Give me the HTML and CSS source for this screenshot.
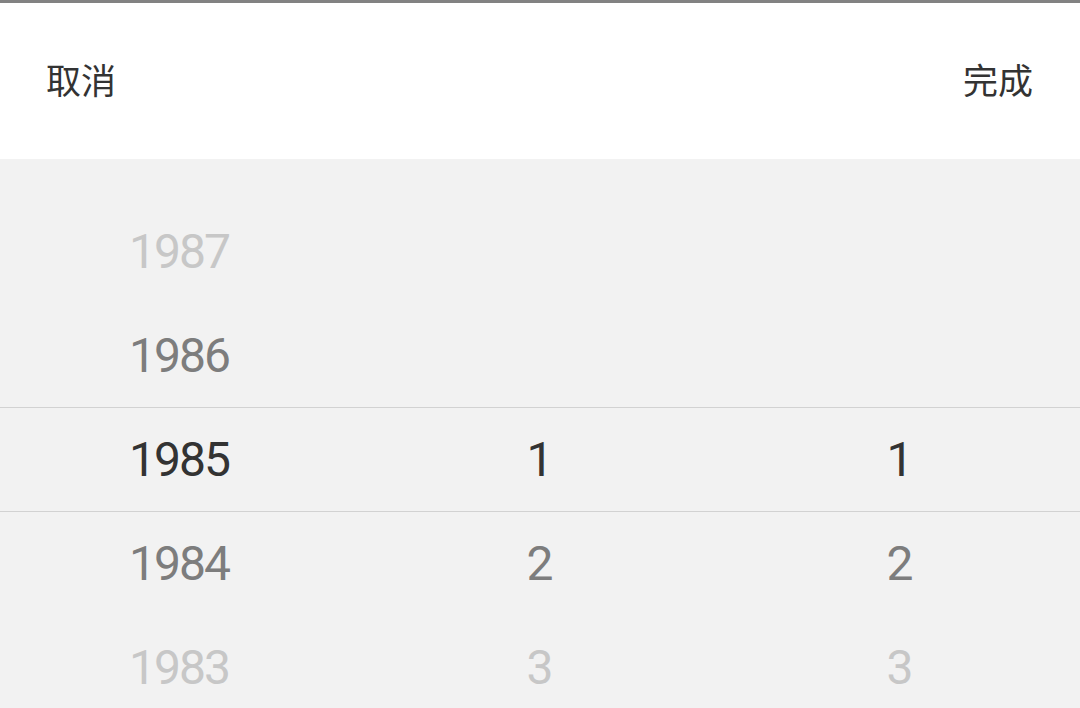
FILE: index.html
```html
<!DOCTYPE html>
<html lang="zh">
<head>
<meta charset="utf-8">
<link rel="stylesheet" href="styles.css">
</head>
<body>
<div class="sheet">
  <header class="toolbar">
    <span class="btn">取消</span>
    <span class="btn">完成</span>
  </header>
  <div class="picker">
    <div class="indicator"></div>
    <div class="col">
      <div class="item far">1987</div>
      <div class="item near">1986</div>
      <div class="item sel">1985</div>
      <div class="item near">1984</div>
      <div class="item far">1983</div>
    </div>
    <div class="col">
      <div class="item"></div>
      <div class="item"></div>
      <div class="item sel">1</div>
      <div class="item near">2</div>
      <div class="item far">3</div>
    </div>
    <div class="col">
      <div class="item"></div>
      <div class="item"></div>
      <div class="item sel">1</div>
      <div class="item near">2</div>
      <div class="item far">3</div>
    </div>
  </div>
</div>
</body>
</html>
```
FILE: styles.css
```css
html, body {
  margin: 0;
  padding: 0;
  width: 1080px;
  height: 708px;
  overflow: hidden;
  background: #f2f2f2;
}
.sheet {
  border-top: 3px solid #828282;
  font-family: Roboto, "Noto Sans CJK SC", sans-serif;
}
.toolbar {
  height: 156px;
  background: #ffffff;
  display: flex;
  align-items: center;
  justify-content: space-between;
  padding: 0 47px 6px 46px;
  box-sizing: border-box;
}
.btn {
  font-family: "Noto Sans CJK SC", sans-serif;
  font-size: 35px;
  color: #333333;
  line-height: 1;
}
.picker {
  position: relative;
  display: flex;
  padding-top: 40px;
  height: 509px;
  background: #f2f2f2;
}
.indicator {
  position: absolute;
  left: 0;
  right: 0;
  top: 248px;
  height: 103px;
  border-top: 1px solid #d2d2d2;
  border-bottom: 1px solid #d2d2d2;
}
.col {
  flex: 1;
  display: flex;
  flex-direction: column;
}
.item {
  height: 104px;
  line-height: 104px;
  padding-top: 1px;
  box-sizing: border-box;
  text-align: center;
  font-size: 48px;
  letter-spacing: -2px;
  text-indent: -2px;
  color: #333333;
  flex-shrink: 0;
}
.item.near { color: #7d7d7d; }
.item.far { color: #c7c7c7; }
.item.sel { color: #333333; }
```
